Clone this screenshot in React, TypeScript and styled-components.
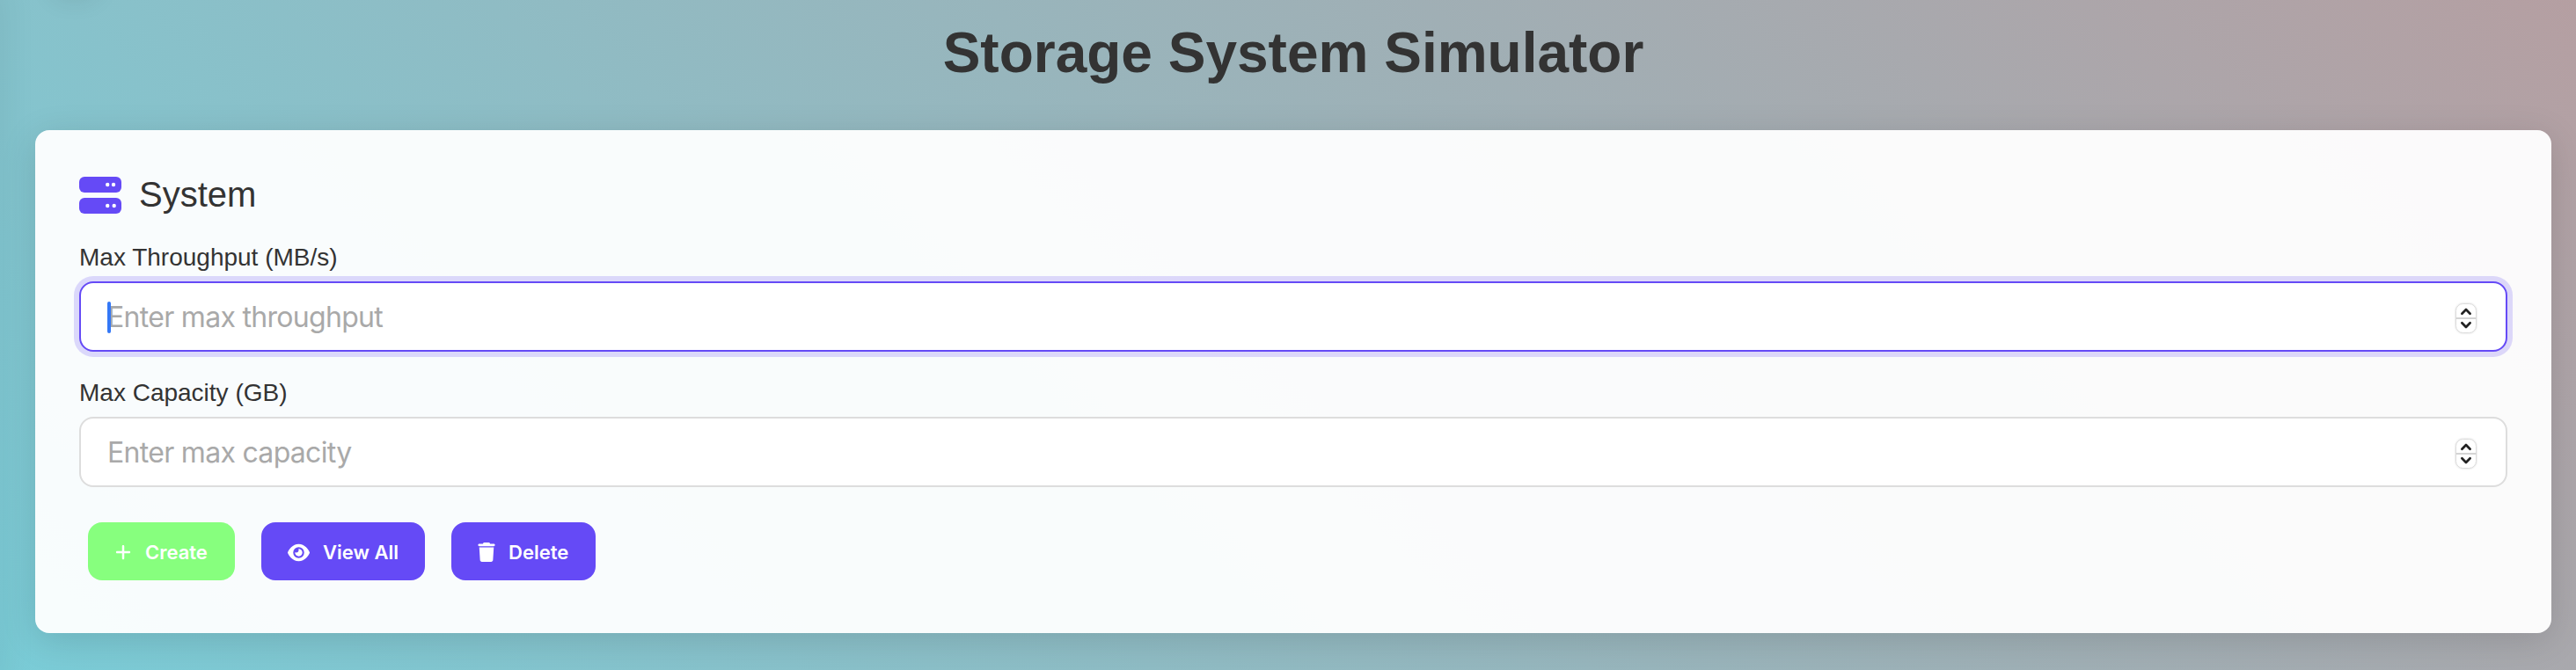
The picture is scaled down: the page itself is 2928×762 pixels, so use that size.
import React from 'react';
import styled, { createGlobalStyle } from 'styled-components';
import { FaEye, FaPlus, FaTrash } from 'react-icons/fa6';

const GlobalStyle = createGlobalStyle`
  * { box-sizing: border-box; }
  body { margin: 0; font-family: 'Liberation Sans', Arial, sans-serif; color: #333; }
`;

const Page = styled.main`
  position: relative;
  height: 762px;
  padding: 0 28px 0 40px;
  overflow: hidden;
  background: linear-gradient(45deg, #7accd7 0%, #b59fa2 100%);
`;

const EdgeShade = styled.div`
  position: absolute;
  left: -20px;
  top: -20px;
  width: 20px;
  height: 802px;
  box-shadow: 0 0 40px rgba(0, 0, 0, 0.1);
`;

const ToggleShade = styled.div`
  position: absolute;
  left: 60px;
  top: -66px;
  width: 50px;
  height: 60px;
  border-radius: 16px;
  box-shadow: 0 4px 30px rgba(0, 0, 0, 0.1);
`;

const Title = styled.h1`
  display: flex;
  align-items: center;
  justify-content: center;
  height: 148px;
  margin: 0;
  padding-bottom: 28px;
  font-size: 64px;
  line-height: 1;
  color: #333;
`;

const Card = styled.section`
  position: relative;
  height: 572px;
  padding: 50px;
  border-radius: 16px;
  background: rgba(255, 255, 255, 0.95);
  box-shadow: 0 8px 40px rgba(0, 0, 0, 0.13);
`;

const Heading = styled.h2`
  display: flex;
  align-items: center;
  gap: 20px;
  height: 48px;
  margin: 0 0 30px;
  font-size: 40px;
  font-weight: 400;
`;

const HeadingText = styled.span`
  padding-bottom: 2px;
`;

const Field = styled.div`
  height: 154px;
`;

const Label = styled.label`
  display: block;
  height: 44px;
  line-height: 34px;
  font-size: 28px;
`;

const InputBox = styled.div<{ $focused?: boolean }>`
  display: flex;
  align-items: center;
  justify-content: space-between;
  height: 80px;
  padding: 0 31px 0 30px;
  border: 2px solid ${(p) => (p.$focused ? '#654af6' : '#ddd')};
  border-radius: 16px;
  background: #fff;
  box-shadow: ${(p) => (p.$focused ? '0 0 0 6px rgba(101, 74, 246, 0.2)' : 'none')};
`;

const Placeholder = styled.span`
  position: relative;
  font: 400 32px Inter, sans-serif;
  letter-spacing: -0.7px;
  color: #a9a9a9;
`;

const Caret = styled.i`
  position: absolute;
  left: 0;
  top: 2px;
  width: 4px;
  height: 36px;
  border-radius: 2px;
  background: #3478f6;
`;

const Actions = styled.div`
  display: flex;
  gap: 30px;
  padding: 10px 10px 0;
`;

const Button = styled.button<{ $width: number; $green?: boolean }>`
  display: flex;
  align-items: center;
  width: ${(p) => p.$width}px;
  height: 66px;
  padding: 2px 0 0 30px;
  border: 0;
  border-radius: 16px;
  background: ${(p) => (p.$green ? '#87ff7e' : '#654af6')};
  color: #fff;
  font: 600 22px Inter, sans-serif;
`;

const ButtonIcon = styled.span<{ $width: number }>`
  display: flex;
  flex: none;
  justify-content: center;
  width: ${(p) => p.$width}px;
`;

const ButtonText = styled.span`
  margin-left: 15px;
  white-space: nowrap;
`;

const ServerIcon = () => (
  <svg width="48" height="42" viewBox="0 0 48 42">
    <rect width="48" height="18" rx="6" fill="#654af6" />
    <rect y="24" width="48" height="18" rx="6" fill="#654af6" />
    <g fill="#fff">
      <circle cx="32.2" cy="9" r="2.2" />
      <circle cx="39" cy="9" r="2.2" />
      <circle cx="32.2" cy="33" r="2.2" />
      <circle cx="39.7" cy="33" r="2.2" />
    </g>
  </svg>
);

const StepperSvg = styled.svg`
  margin-top: 4px;
  filter: drop-shadow(0 0 1px rgba(0, 0, 0, 0.15));
`;

const Stepper = () => (
  <StepperSvg width="28" height="38" viewBox="0 0 28 38">
    <rect x="2.5" y="2.5" width="23" height="33" rx="8" fill="#fff" stroke="#dcdcdc" />
    <path d="M2.5 19h23" stroke="#d4d4d4" strokeWidth="2" />
    <path d="M9.4 13.7L14 9l4.6 4.7M9.4 24.3L14 29l4.6-4.7" fill="none" stroke="#222" strokeWidth="2.7" strokeLinecap="round" strokeLinejoin="round" />
  </StepperSvg>
);

export default function App() {
  return (
    <>
      <GlobalStyle />
      <Page>
        <EdgeShade />
        <ToggleShade />
        <Title>Storage System Simulator</Title>
        <Card>
          <Heading><ServerIcon /><HeadingText>System</HeadingText></Heading>
          <Field>
            <Label>Max Throughput (MB/s)</Label>
            <InputBox $focused><Placeholder><Caret />Enter max throughput</Placeholder><Stepper /></InputBox>
          </Field>
          <Field>
            <Label>Max Capacity (GB)</Label>
            <InputBox><Placeholder>Enter max capacity</Placeholder><Stepper /></InputBox>
          </Field>
          <Actions>
            <Button $width={167} $green><ButtonIcon $width={20}><FaPlus size={20} /></ButtonIcon><ButtonText>Create</ButtonText></Button>
            <Button $width={186}><ButtonIcon $width={25}><FaEye size={25} /></ButtonIcon><ButtonText>View All</ButtonText></Button>
            <Button $width={164}><ButtonIcon $width={20}><FaTrash size={22} /></ButtonIcon><ButtonText>Delete</ButtonText></Button>
          </Actions>
        </Card>
      </Page>
    </>
  );
}
